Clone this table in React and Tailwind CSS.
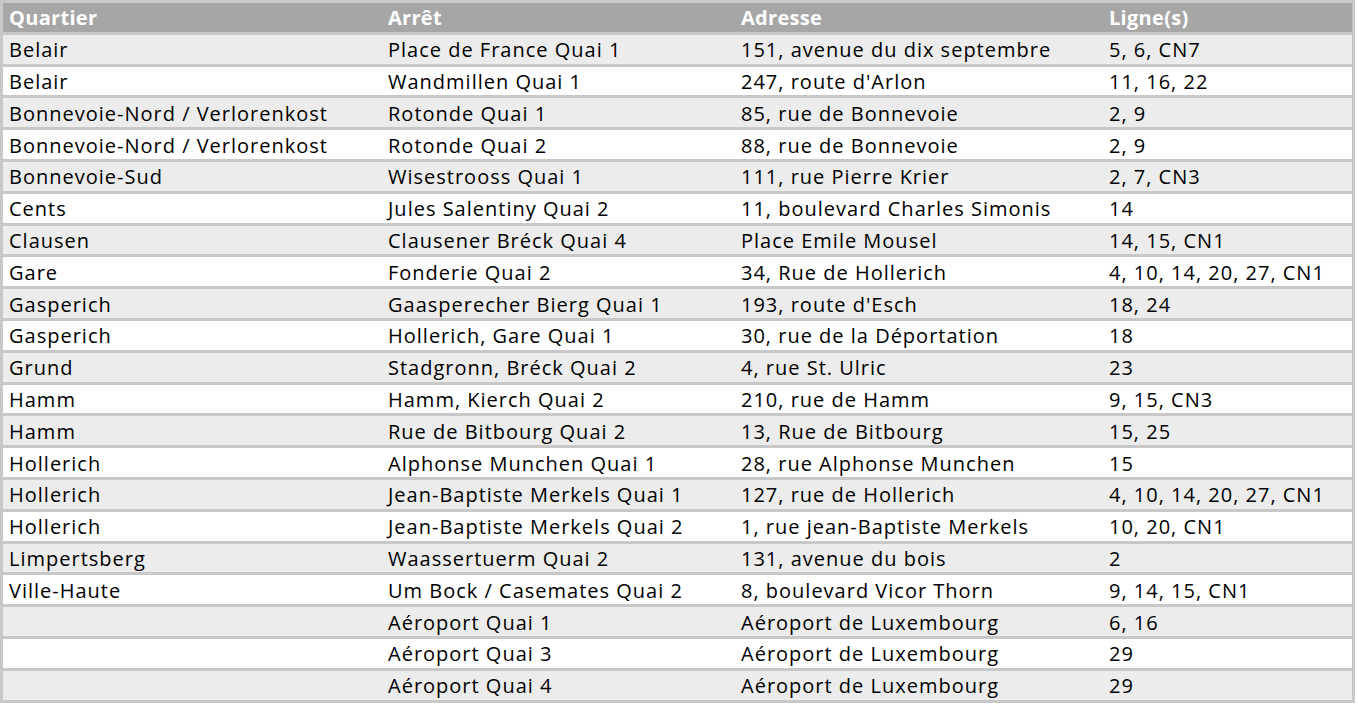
import React from "react";

const rows = [
  ["Belair", "Place de France Quai 1", "151, avenue du dix septembre", "5, 6, CN7"],
  ["Belair", "Wandmillen Quai 1", "247, route d'Arlon", "11, 16, 22"],
  ["Bonnevoie-Nord / Verlorenkost", "Rotonde Quai 1", "85, rue de Bonnevoie", "2, 9"],
  ["Bonnevoie-Nord / Verlorenkost", "Rotonde Quai 2", "88, rue de Bonnevoie", "2, 9"],
  ["Bonnevoie-Sud", "Wisestrooss Quai 1", "111, rue Pierre Krier", "2, 7, CN3"],
  ["Cents", "Jules Salentiny Quai 2", "11, boulevard Charles Simonis", "14"],
  ["Clausen", "Clausener Bréck Quai 4", "Place Emile Mousel", "14, 15, CN1"],
  ["Gare", "Fonderie Quai 2", "34, Rue de Hollerich", "4, 10, 14, 20, 27, CN1"],
  ["Gasperich", "Gaasperecher Bierg Quai 1", "193, route d'Esch", "18, 24"],
  ["Gasperich", "Hollerich, Gare Quai 1", "30, rue de la Déportation", "18"],
  ["Grund", "Stadgronn, Bréck Quai 2", "4, rue St. Ulric", "23"],
  ["Hamm", "Hamm, Kierch Quai 2", "210, rue de Hamm", "9, 15, CN3"],
  ["Hamm", "Rue de Bitbourg Quai 2", "13, Rue de Bitbourg", "15, 25"],
  ["Hollerich", "Alphonse Munchen Quai 1", "28, rue Alphonse Munchen", "15"],
  ["Hollerich", "Jean-Baptiste Merkels Quai 1", "127, rue de Hollerich", "4, 10, 14, 20, 27, CN1"],
  ["Hollerich", "Jean-Baptiste Merkels Quai 2", "1, rue jean-Baptiste Merkels", "10, 20, CN1"],
  ["Limpertsberg", "Waassertuerm Quai 2", "131, avenue du bois", "2"],
  ["Ville-Haute", "Um Bock / Casemates Quai 2", "8, boulevard Vicor Thorn", "9, 14, 15, CN1"],
  ["", "Aéroport Quai 1", "Aéroport de Luxembourg", "6, 16"],
  ["", "Aéroport Quai 3", "Aéroport de Luxembourg", "29"],
  ["", "Aéroport Quai 4", "Aéroport de Luxembourg", "29"],
];

const cols = "grid grid-cols-[379px_353px_368px_1fr]";

export default function App() {
  return (
    <div className="w-[1358px] h-[705px] bg-white font-['Open_Sans',sans-serif] text-[20px] leading-none">
      <div className="w-[1355px] border-[3px] border-b-0 border-[#c8c8c8]">
        <div className={`${cols} h-[28.8px] items-center bg-[#a6a6a6] border-b-[3px] border-[#c8c8c8] box-content font-bold text-white tracking-[0.3px]`}>
          <div className="pl-[6px] pt-[2px]">Quartier</div>
          <div className="pl-[6px] pt-[2px]">Arrêt</div>
          <div className="pl-[6px] pt-[2px]">Adresse</div>
          <div className="pl-[6px] pt-[2px]">Ligne(s)</div>
        </div>
        {rows.map((r, i) => (
          <div
            key={i}
            className={`${cols} h-[28.8px] items-center border-b-[3px] border-[#c8c8c8] box-content text-black tracking-[1px] ${i % 2 === 0 ? "bg-[#ececec]" : "bg-white"}`}
          >
            {r.map((c, j) => (
              <div key={j} className="pl-[6px] pt-[2px] whitespace-nowrap">{c}</div>
            ))}
          </div>
        ))}
      </div>
    </div>
  );
}
